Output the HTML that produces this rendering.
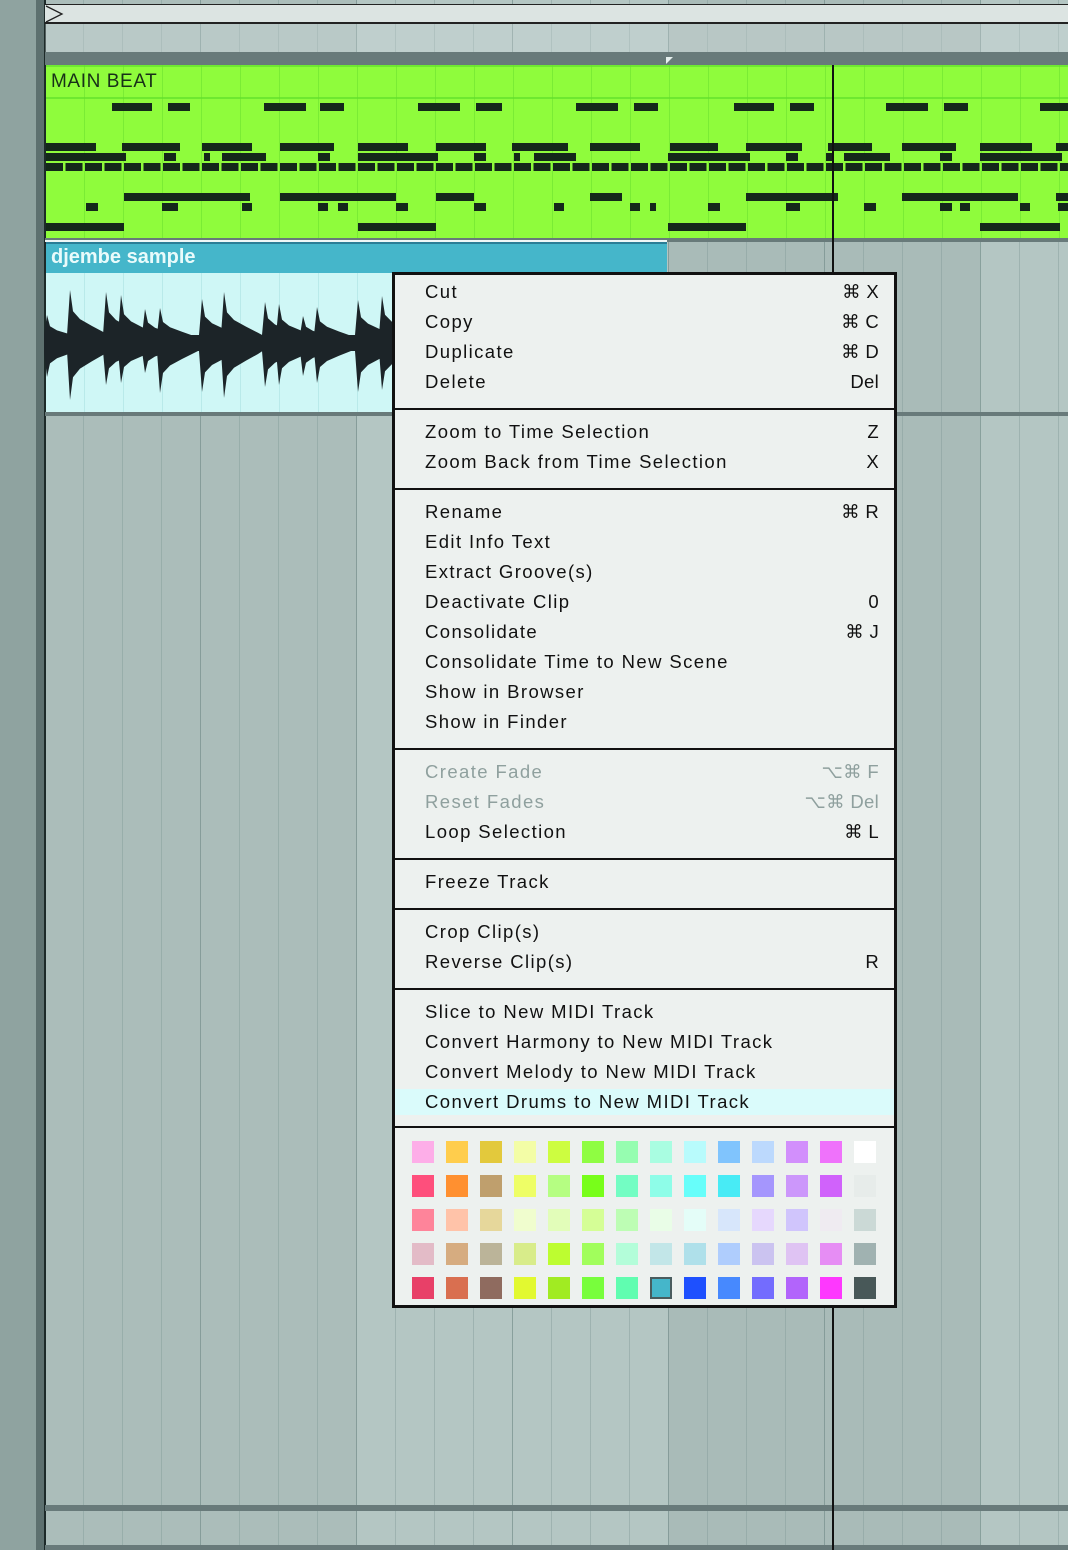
<!DOCTYPE html>
<html><head><meta charset="utf-8"><style>
*{margin:0;padding:0;box-sizing:border-box}
body{width:1068px;height:1550px;position:relative;overflow:hidden;background:#b0c2bf;font-family:"Liberation Sans",sans-serif}
.a{position:absolute}
.menu{position:absolute;left:392px;top:272px;width:505px;height:1036px;background:#edf1ef;border:3px solid #111}
.it{position:absolute;left:0;right:0;height:30px;line-height:30px;font-size:18.5px;letter-spacing:1.4px;color:#111;padding-left:30px}
.it span{position:absolute;right:15px;top:0;letter-spacing:0.3px}
.dis{color:#8fa09e}
.sep{position:absolute;left:0;right:0;height:2px;background:#111}
.sw{position:absolute;width:22px;height:22px}
</style></head><body>
<div class="a" style="left:0;top:0;width:36px;height:1550px;background:#8fa3a0"></div>
<div class="a" style="left:36px;top:0;width:9px;height:1550px;background:#5d706f"></div>
<div class="a" style="left:45px;top:0;width:312px;height:1550px;background:#abbdba"></div>
<div class="a" style="left:357px;top:0;width:311px;height:1550px;background:#b4c6c3"></div>
<div class="a" style="left:668px;top:0;width:312px;height:1550px;background:#a9bbb8"></div>
<div class="a" style="left:980px;top:0;width:88px;height:1550px;background:#b4c6c3"></div>
<div class="a" style="left:45px;top:0;width:1023px;height:1550px;background:repeating-linear-gradient(90deg,transparent 0 38px,rgba(130,155,152,.45) 38px 39px)"></div>
<div class="a" style="left:45px;top:0;width:1023px;height:1550px;background:repeating-linear-gradient(90deg,transparent 0 155px,rgba(115,140,137,.5) 155px 156px)"></div>
<div class="a" style="left:44px;top:0;width:2px;height:1550px;background:#1d2a29"></div>
<div class="a" style="left:45px;top:4px;width:1023px;height:20px;background:#dce4e2;border-top:1px solid #222;border-bottom:2px solid #222"></div>
<svg class="a" style="left:45px;top:5px" width="20" height="18"><path d="M1 1 L17 9 L1 17" fill="none" stroke="#222" stroke-width="1.3"/></svg>
<div class="a" style="left:45px;top:24px;width:1023px;height:28px;background:rgba(220,230,228,.3)"></div>
<div class="a" style="left:45px;top:52px;width:1023px;height:13px;background:#687a7a"></div>
<div class="a" style="left:666px;top:57px;width:0;height:0;border-top:7px solid #e6f0ee;border-right:7px solid transparent"></div>
<div class="a" style="left:46px;top:65px;width:1022px;height:173px;background:#8ffc3c;border-top:2px solid #6ee830"></div>
<div class="a" style="left:46px;top:97px;width:1022px;height:2px;background:#6ee830"></div>
<div class="a" style="left:46px;top:65px;width:1022px;height:173px;background:repeating-linear-gradient(90deg,transparent 0 38px,rgba(100,220,45,.5) 38px 39px)"></div>
<div class="a" style="left:51px;top:71px;font-size:19px;letter-spacing:0.6px;color:#183018">MAIN BEAT</div>
<div id="notes"></div>
<div class="a" style="left:46px;top:163px;width:1022px;height:8px;background:repeating-linear-gradient(90deg,#14281a 0 17px,transparent 17px 19.5px)"></div>
<div class="a" style="left:45px;top:238px;width:1023px;height:4px;background:#687a7a"></div>
<div class="a" style="left:45px;top:240px;width:622px;height:2px;background:#eef6f6"></div>
<div class="a" style="left:46px;top:242px;width:621px;height:31px;background:#45b6ca;border-top:2px solid #2a7d96"></div>
<div class="a" style="left:51px;top:246px;font-size:20px;font-weight:bold;color:#e9fbfb">djembe sample</div>
<div class="a" style="left:46px;top:273px;width:621px;height:139px;background:#cff7f6"></div>
<div class="a" style="left:46px;top:273px;width:621px;height:139px;background:repeating-linear-gradient(90deg,transparent 0 38px,rgba(170,225,225,.6) 38px 39px)"></div>
<svg id="wave" class="a" style="left:0;top:0" width="400" height="420"></svg>
<div class="a" style="left:45px;top:412px;width:1023px;height:4px;background:#687a7a"></div>
<div class="a" style="left:45px;top:1505px;width:1023px;height:6px;background:#687a7a"></div>
<div class="a" style="left:45px;top:1545px;width:1023px;height:5px;background:#687a7a"></div>
<div class="a" style="left:832px;top:65px;width:2px;height:1485px;background:#111"></div>

<div class="menu">
<div class="it" style="top:2px">Cut<span>⌘ X</span></div>
<div class="it" style="top:32px">Copy<span>⌘ C</span></div>
<div class="it" style="top:62px">Duplicate<span>⌘ D</span></div>
<div class="it" style="top:92px">Delete<span>Del</span></div>
<div class="sep" style="top:133px"></div>
<div class="it" style="top:142px">Zoom to Time Selection<span>Z</span></div>
<div class="it" style="top:172px">Zoom Back from Time Selection<span>X</span></div>
<div class="sep" style="top:213px"></div>
<div class="it" style="top:222px">Rename<span>⌘ R</span></div>
<div class="it" style="top:252px">Edit Info Text</div>
<div class="it" style="top:282px">Extract Groove(s)</div>
<div class="it" style="top:312px">Deactivate Clip<span>0</span></div>
<div class="it" style="top:342px">Consolidate<span>⌘ J</span></div>
<div class="it" style="top:372px">Consolidate Time to New Scene</div>
<div class="it" style="top:402px">Show in Browser</div>
<div class="it" style="top:432px">Show in Finder</div>
<div class="sep" style="top:473px"></div>
<div class="it dis" style="top:482px">Create Fade<span>⌥⌘ F</span></div>
<div class="it dis" style="top:512px">Reset Fades<span>⌥⌘ Del</span></div>
<div class="it" style="top:542px">Loop Selection<span>⌘ L</span></div>
<div class="sep" style="top:583px"></div>
<div class="it" style="top:592px">Freeze Track</div>
<div class="sep" style="top:633px"></div>
<div class="it" style="top:642px">Crop Clip(s)</div>
<div class="it" style="top:672px">Reverse Clip(s)<span>R</span></div>
<div class="sep" style="top:713px"></div>
<div class="it" style="top:722px">Slice to New MIDI Track</div>
<div class="it" style="top:752px">Convert Harmony to New MIDI Track</div>
<div class="it" style="top:782px">Convert Melody to New MIDI Track</div>
<div class="it" style="top:814px;background:#dafbfb;height:26px;line-height:26px">Convert Drums to New MIDI Track</div>
<div class="sep" style="top:851px"></div>
<div id="pal"></div>
</div>
<script>
var n=document.getElementById('notes'),h='';
var rows=[[103,[[112,152],[168,190],[264,306],[320,344],[418,460],[476,502],[576,618],[634,658],[734,774],[790,814],[886,928],[944,968],[1040,1068]]],
[143,[[46,96],[122,180],[202,252],[280,334],[358,408],[436,486],[512,568],[590,640],[670,718],[746,802],[828,872],[902,956],[980,1032],[1056,1068]]],
[153,[[46,126],[164,176],[204,210],[222,266],[318,330],[358,438],[474,486],[514,520],[534,576],[668,750],[786,798],[826,832],[844,890],[940,952],[980,1062]]],
[193,[[124,250],[280,396],[436,474],[590,622],[746,838],[902,1018],[1056,1068]]],
[203,[[86,98],[162,178],[242,252],[318,328],[338,348],[396,408],[474,486],[554,564],[630,640],[650,656],[708,720],[786,800],[864,876],[940,952],[960,970],[1020,1030],[1058,1068]]],
[223,[[46,124],[358,436],[668,746],[980,1060]]]];
rows.forEach(function(r){r[1].forEach(function(s){h+='<div class="a" style="left:'+s[0]+'px;top:'+r[0]+'px;width:'+(s[1]-s[0])+'px;height:8px;background:#14281a"></div>'})});
n.innerHTML=h;
var c=343,pk=[[47,315,377],[70,290,400],[106,292,385],[121,295,383],[145,309,373],[160,308,393],[202,299,392],[224,292,398],[265,302,387],[279,304,385],[303,316,376],[317,307,383],[358,300,392],[382,296,390]],w='<rect x="46" y="335" width="346" height="16" fill="#1c2428"/>';
pk.forEach(function(p){var x=p[0],u=c-p[1],d=p[2]-c;
w+='<polygon fill="#1c2428" points="'+[[x-3,c-8],[x,p[1]],[x+3,c-u*.6],[x+10,c-u*.45],[x+22,c-u*.32],[x+34,c-u*.2],[x+40,c-7],[x+40,c+7],[x+34,c+d*.2],[x+22,c+d*.32],[x+10,c+d*.45],[x+3,c+d*.6],[x,p[2]],[x-3,c+8]].map(function(q){return Math.min(q[0],392)+','+q[1]}).join(' ')+'"/>'});
document.getElementById('wave').innerHTML=w;
var cols=[['#fdaee8','#ffcd4c','#e3c93c','#f3fda6','#cdfd40','#8ffd42','#96fdb0','#a9fde1','#b8fbfc','#80c4fd','#bcd9fd','#d28ffc','#ef72fb','#ffffff'],
['#fe4f7c','#ff9030','#bf9f6d','#eefe66','#b5fe82','#78fe1a','#73fdc3','#8efde8','#67fefa','#48ebf5','#a596fd','#cc97fb','#d062fb','#e7ecea'],
['#fe849a','#ffc3a9','#e6d79b','#f0fdce','#e2fdb9','#d5fe96','#bdfdb4','#e9fde7','#e4fdf8','#d7e6fb','#e6d8fd','#d0c5fc','#efebf1','#cbd9d6'],
['#e3bbc7','#d6ac80','#bbb499','#d8ec8a','#bdfd30','#a1fe5c','#b3fdd9','#c2e6e8','#afe0ea','#afcdfd','#cbc3f0','#dfc3f3','#e68df4','#a0b2b1'],
['#e84068','#d96f50','#8f6b5f','#e2f930','#a1eb22','#78fe3c','#60fdb0','#45b6ca','#1e50fe','#4789fe','#736cfe','#b264fb','#fe38fe','#485858']];
var ph='';cols.forEach(function(r,i){r.forEach(function(col,j){ph+='<div class="sw" style="left:'+(17+j*34)+'px;top:'+(866+i*34)+'px;background:'+col+(i==4&&j==7?';border:2px solid #4a5c5e':'')+'"></div>'})});
document.getElementById('pal').innerHTML=ph;
</script>
</body></html>
